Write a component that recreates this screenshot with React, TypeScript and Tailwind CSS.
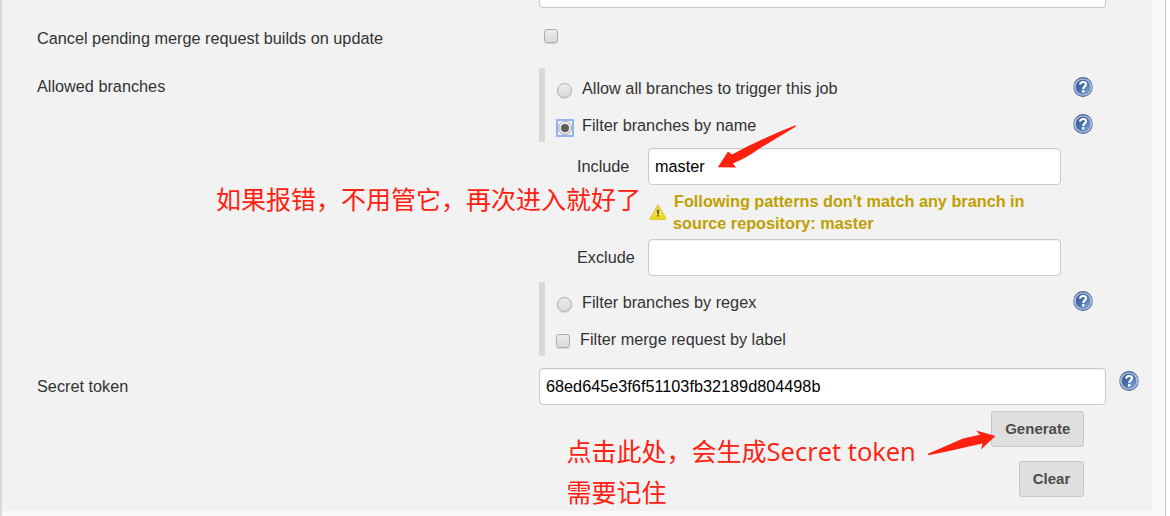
import type { ReactNode } from "react";

function HelpIcon() {
  return (
    <svg width="20" height="20" viewBox="0 0 20 20" className="block shrink-0">
      <defs>
        <linearGradient id="ball" x1="0" y1="0" x2="1" y2="1">
          <stop offset="0" stopColor="#2f5794" />
          <stop offset="0.5" stopColor="#4a70ab" />
          <stop offset="1" stopColor="#8aabdb" />
        </linearGradient>
        <linearGradient id="rim" x1="0" y1="0" x2="0" y2="1">
          <stop offset="0" stopColor="#3c5b92" />
          <stop offset="0.5" stopColor="#8095bd" />
          <stop offset="1" stopColor="#3c5b92" />
        </linearGradient>
      </defs>
      <circle cx="10" cy="10" r="9.9" fill="url(#rim)" />
      <circle cx="10" cy="10" r="8.8" fill="#b4c5e2" />
      <circle cx="10" cy="10" r="7.4" fill="#5a7bb2" />
      <circle cx="10" cy="10" r="6.9" fill="url(#ball)" />
      <path d="M7 7.700C7.200 5.700 8.400 5 10 5c1.900 0 3 .9 3 2.300 0 2.100-2.700 2.200-2.700 4.600" fill="none" stroke="#fff" strokeWidth="2.2" />
      <rect x="9" y="13.100" width="2.500" height="2.400" fill="#fff" />
    </svg>
  );
}

function WarningIcon() {
  return (
    <svg width="18" height="18" viewBox="0 0 18 18" className="block shrink-0">
      <defs>
        <linearGradient id="warn" x1="0" y1="0" x2="0" y2="1">
          <stop offset="0" stopColor="#dfc91c" />
          <stop offset="0.5" stopColor="#f4e34a" />
          <stop offset="1" stopColor="#ead505" />
        </linearGradient>
      </defs>
      <path d="M9 1.500 17 15.400a.8.8 0 0 1-.7 1.200H1.700a.8.8 0 0 1-.7-1.200Z" fill="url(#warn)" stroke="#d9c956" strokeWidth="1" strokeLinejoin="round" />
      <path d="M7.700 6.800h2.600l-.5 4.200H8.200Z" fill="#6b6328" />
      <rect x="8.100" y="11.800" width="1.800" height="1.700" fill="#6b6328" />
    </svg>
  );
}

function Checkbox() {
  return (
    <span className="block size-[14px] shrink-0 rounded-[3px] border border-[#adadad] bg-linear-to-b from-[#ebebeb] to-[#dadada] shadow-[0_1px_1px_rgba(0,0,0,0.12)]" />
  );
}

function Radio({ checked = false }: { checked?: boolean }) {
  if (checked) {
    return (
      <span className="flex size-[18px] shrink-0 items-center justify-center rounded-[1px] border-2 border-[#8fb1f7] bg-[#f2f2f2]">
        <span className="flex size-[14px] shrink-0 items-center justify-center rounded-full border border-[#adadad] bg-linear-to-b from-[#f0f0f0] to-[#dcdcdc]">
          <span className="block size-[8px] shrink-0 rounded-full bg-[#5c5c5c]" />
        </span>
      </span>
    );
  }
  return (
    <span className="block size-[15px] shrink-0 rounded-full border border-[#adadad] bg-linear-to-b from-[#ebebeb] to-[#dadada] shadow-[0_1px_1px_rgba(0,0,0,0.12)]" />
  );
}

function OptionRow({ control, label, help }: { control: ReactNode; label: string; help?: boolean }) {
  return (
    <div className="flex h-[37px] items-center">
      <span className="flex w-[25px] shrink-0 items-center pt-[7px]">{control}</span>
      <span className="grow pt-[3px]">{label}</span>
      {help && <HelpIcon />}
    </div>
  );
}

function Field({ label, value }: { label: string; value: string }) {
  return (
    <div className="flex h-[37px] w-[522px] items-center pl-[38px]">
      <span className="w-[71px] shrink-0 pb-[2px]">{label}</span>
      <TextBox value={value} />
    </div>
  );
}

function TextBox({ value }: { value: string }) {
  return (
    <div className="flex h-[37px] grow items-center rounded-[4px] border border-[#c9c9c9] bg-white px-[6px] pb-[2px] text-black shadow-[inset_0_1px_1px_rgba(0,0,0,0.06)]">
      {value}
    </div>
  );
}

function Button({ children }: { children: ReactNode }) {
  return (
    <button className="flex h-[36px] items-center rounded-[3px] border border-[#c8c8c8] bg-[#dfdfdf] px-[12.750px] text-[15px] leading-5 font-bold text-[#4c4c4c]">
      {children}
    </button>
  );
}

export default function App() {
  return (
    <div className="relative h-[516px] w-[1170px] overflow-hidden bg-white font-['Liberation_Sans',Arial,sans-serif] text-[16.25px] leading-[22px] text-[#333]">
      <div className="h-[516px] w-[1166px] border-r border-l-2 border-r-[#c9c9c9] border-l-[#d9d9d9] bg-[#f9f9f9]">
        <main className="flex h-[511px] w-[1150px] bg-[#f2f2f2] pl-[35px]">
          <div className="flex w-[502px] shrink-0 flex-col">
            <span className="mt-[27px]">Cancel pending merge request builds on update</span>
            <span className="mt-[26px]">Allowed branches</span>
            <span className="mt-[278px]">Secret token</span>
          </div>
          <div className="flex w-[600px] flex-col">
            <div className="h-[8px] w-[567px] rounded-b-[4px] border border-t-0 border-[#c9c9c9] bg-white" />
            <div className="flex h-[60px] pt-[21px] pl-[5px]">
              <Checkbox />
            </div>
            <div className="h-[74px] w-[554px] border-l-[6px] border-[#d9d9d9] pl-[12px]">
              <OptionRow control={<Radio />} label="Allow all branches to trigger this job" help />
              <OptionRow
                control={
                  <span className="-ml-px flex pt-[2px]">
                    <Radio checked />
                  </span>
                }
                label="Filter branches by name"
                help
              />
            </div>
            <div className="mt-[6px]">
              <Field label="Include" value="master" />
            </div>
            <div className="flex h-[54px] pt-[5px] pl-[110px] font-bold text-[#bfa000]">
              <div className="w-[24px] pt-[13px]">
                <WarningIcon />
              </div>
              <p className="w-[380px] indent-[1px]">
                Following patterns don't match any branch in source repository: master
              </p>
            </div>
            <Field label="Exclude" value="" />
            <div className="mt-[6px] h-[74px] w-[554px] border-l-[6px] border-[#d9d9d9] pl-[12px]">
              <OptionRow control={<Radio />} label="Filter branches by regex" help />
              <div className="-ml-[2px]">
                <OptionRow
                  control={
                    <span className="pl-px">
                      <Checkbox />
                    </span>
                  }
                  label="Filter merge request by label"
                />
              </div>
            </div>
            <div className="mt-[12px] flex h-[37px] gap-[13px]">
              <TextBox value="68ed645e3f6f51103fb32189d804498b" />
              <span className="pt-[3px]">
                <HelpIcon />
              </span>
            </div>
            <div className="mt-[6px] flex w-[545px] flex-col items-end gap-[14px]">
              <Button>Generate</Button>
              <Button>Clear</Button>
            </div>
          </div>
        </main>
      </div>

      <div className="absolute top-[178px] left-[216px] font-['Noto_Sans_CJK_SC',sans-serif] text-[25px] leading-[40px] whitespace-nowrap text-[#ff2010]">
        如果报错，不用管它，再次进入就好了
      </div>
      <div className="absolute top-[431px] left-[566.500px] font-['Open_Sans','Noto_Sans_CJK_SC',sans-serif] text-[25px] leading-[40px] whitespace-nowrap text-[#ff2010]">
        点击此处，会生成<span className="text-[25.600px]">Secret token</span>
        <br />
        需要记住
      </div>
      <svg className="absolute top-[120px] left-[710px]" width="92" height="52" viewBox="710 120 92 52">
        <path d="M796 126.500 795.500 125.300Q765 137 732 154.500L728 151.500 717.800 167.200 736 167.500 733 163.500Q748 157 758 149.500Z" fill="#ff2010" />
      </svg>
      <svg className="absolute top-[425px] left-[920px]" width="80" height="35" viewBox="920 425 80 35">
        <path d="M928 453.700 928.500 455.300Q950 451 966.700 447L982.500 443.500 981 449.500 995.500 436 976 430.600 980 434.700 963 438.500Z" fill="#ff2010" />
      </svg>
    </div>
  );
}
